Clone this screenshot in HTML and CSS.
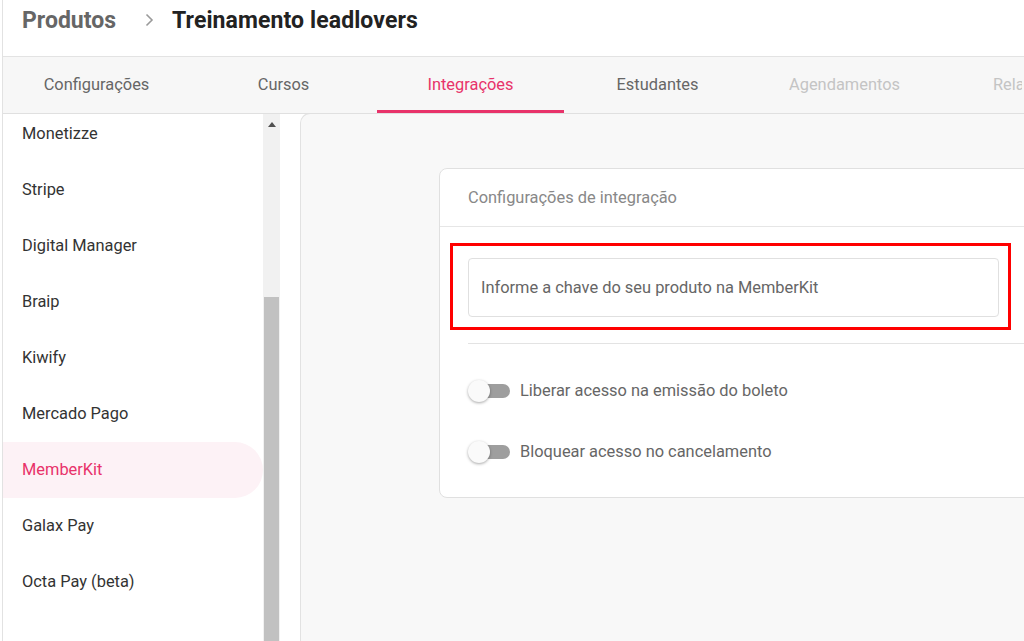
FILE: index.html
```html
<!DOCTYPE html>
<html>
	<head>
		<meta charset="utf-8">
		<link rel="stylesheet" href="styles.css">
	</head>
	<body>
		<div class="app">
			<div class="header">
				<span class="crumb">Produtos</span>
				<svg class="chev" width="9" height="14" viewBox="0 0 9 14"><path d="M1.5 1.5 L7 7 L1.5 12.5" fill="none" stroke="#9a9a9a" stroke-width="1.6"/></svg>
				<span class="title">Treinamento leadlovers</span>
			</div>

			<div class="tabs">
				<div class="tab">Configurações</div>
				<div class="tab">Cursos</div>
				<div class="tab active">Integrações</div>
				<div class="tab">Estudantes</div>
				<div class="tab disabled">Agendamentos</div>
				<div class="tab disabled last">Relatórios</div>
			</div>

			<div class="content">
				<div class="sidebar">
					<ul class="list">
						<li>Monetizze</li>
						<li>Stripe</li>
						<li>Digital Manager</li>
						<li>Braip</li>
						<li>Kiwify</li>
						<li>Mercado Pago</li>
						<li class="selected">MemberKit</li>
						<li>Galax Pay</li>
						<li>Octa Pay (beta)</li>
					</ul>
				</div>
				<div class="scrollbar">
					<div class="arrow"></div>
					<div class="thumb"></div>
				</div>

				<div class="main">
					<div class="card">
						<div class="card-head">Configurações de integração</div>
						<div class="card-body">
							<div class="mark">
								<div class="field">Informe a chave do seu produto na MemberKit</div>
							</div>
							<hr class="divider">
							<div class="switches">
								<div class="switch-row">
									<span class="switch"><span class="track"></span><span class="knob"></span></span>
									<span class="switch-label">Liberar acesso na emissão do boleto</span>
								</div>
								<div class="switch-row">
									<span class="switch"><span class="track"></span><span class="knob"></span></span>
									<span class="switch-label">Bloquear acesso no cancelamento</span>
								</div>
							</div>
						</div>
					</div>
				</div>
			</div>
		</div>
	</body>
</html>
```

FILE: styles.css
```css
body, html {
	height: 100%;
	min-height: 100%;
}

body {
	margin: 0;
	padding: 0;
	background: #fff;
	font-family: Roboto, "Liberation Sans", sans-serif;
	overflow: hidden;
}

.app {
	margin-left: 2px;
	height: 641px;
	border-left: 1px solid #e2e2e2;
	display: flex;
	flex-direction: column;
}

.header {
	height: 57px;
	border-bottom: 1px solid #e3e3e3;
	display: flex;
	align-items: center;
	padding: 0 0 16px 19px;
	font-size: 23px;
	font-weight: bold;
	box-sizing: border-box;
	flex-shrink: 0;
}

.crumb {
	color: #666;
}

.chev {
	margin: 0 18px 0 29px;
}

.title {
	color: #222;
	letter-spacing: 0.1px;
}

.tabs {
	height: 57px;
	background: #f7f7f7;
	border-bottom: 1px solid #e0e0e0;
	display: flex;
	box-sizing: border-box;
	flex-shrink: 0;
}

.tab {
	width: 187px;
	flex-shrink: 0;
	display: flex;
	align-items: center;
	justify-content: center;
	font-size: 16.4px;
	color: #666;
	box-sizing: border-box;
	border-bottom: 3px solid transparent;
	padding-top: 1px;
	white-space: nowrap;
}

.tab.last {
	width: 84px;
	justify-content: flex-start;
	padding-left: 55px;
	overflow: hidden;
}

.tab.active {
	color: #e8336a;
	border-bottom-color: #e8336a;
}

.tab.disabled {
	color: #c4c4c4;
}

.content {
	flex: 1;
	display: flex;
	overflow: hidden;
}

.sidebar {
	width: 260px;
	flex-shrink: 0;
	overflow: hidden;
}

.list {
	list-style: none;
	margin: -8px 0 0 0;
	padding: 0;
}

.list li {
	height: 56px;
	line-height: 56px;
	padding-left: 19px;
	font-size: 16.4px;
	color: #333;
}

.list li.selected {
	background: #fdf2f6;
	color: #e8336a;
	border-radius: 0 28px 28px 0;
}

.scrollbar {
	width: 17px;
	flex-shrink: 0;
	background: #f1f1f1;
	display: flex;
	flex-direction: column;
	align-items: center;
}

.arrow {
	width: 0;
	height: 0;
	margin-top: 8px;
	border-left: 4px solid transparent;
	border-right: 4px solid transparent;
	border-bottom: 5px solid #505050;
}

.thumb {
	width: 15px;
	margin-top: 170px;
	flex: 1;
	background: #c1c1c1;
}

.main {
	flex: 1;
	margin-left: 20px;
	background: #f8f8f8;
	border-left: 1px solid #e2e2e2;
	border-top: 1px solid #e2e2e2;
	border-top-left-radius: 10px;
	margin-top: -1px;
	padding: 54px 0 0 138px;
	overflow: hidden;
}

.card {
	width: 640px;
	background: #fff;
	border: 1px solid #e0e0e0;
	border-radius: 8px;
	box-sizing: border-box;
	height: 330px;
}

.card-head {
	height: 57px;
	line-height: 58px;
	padding-left: 28px;
	font-size: 16.4px;
	color: #888;
	border-bottom: 1px solid #e6e6e6;
}

.card-body {
	padding: 16px 0 0 10px;
}

.mark {
	width: 561px;
	height: 87px;
	box-sizing: border-box;
	border: 3px solid #ff0000;
	padding: 12px 9px 0 15px;
}

.field {
	height: 59px;
	border: 1px solid #e0e0e0;
	border-radius: 4px;
	box-sizing: border-box;
	padding-left: 12px;
	line-height: 57px;
	font-size: 16.4px;
	color: #666;
}

.divider {
	border: 0;
	border-top: 1px solid #e3e3e3;
	margin: 13px 0 0 18px;
	height: 0;
}

.switches {
	padding-top: 16px;
}

.switch-row {
	display: flex;
	align-items: center;
	height: 61px;
	padding-left: 18px;
}

.switch {
	position: relative;
	width: 42px;
	height: 22px;
	margin-right: 10px;
}

.track {
	position: absolute;
	left: 4px;
	top: 4px;
	width: 38px;
	height: 14px;
	border-radius: 7px;
	background: #9e9e9e;
}

.knob {
	position: absolute;
	left: 0;
	top: 0;
	width: 22px;
	height: 22px;
	border-radius: 50%;
	background: #fafafa;
	box-shadow: 0 1px 3px rgba(0, 0, 0, 0.35);
}

.switch-label {
	font-size: 16.4px;
	color: #666;
}
```
